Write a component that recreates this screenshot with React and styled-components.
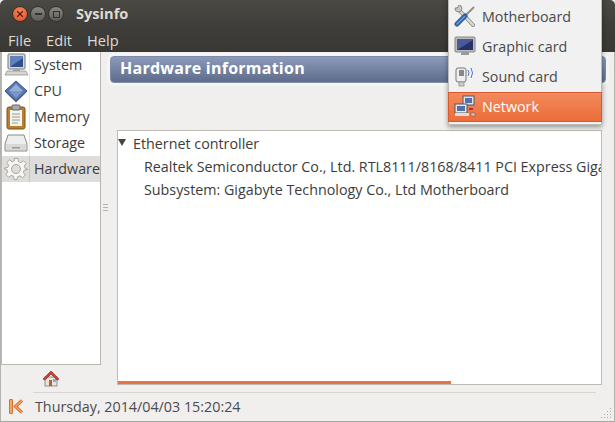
import React from "react";
import styled, { createGlobalStyle } from "styled-components";

const Global = createGlobalStyle`
  html, body { margin: 0; padding: 0; background: #f0f0f0; }
  * { box-sizing: border-box; }
`;

const Win = styled.div`
  position: relative;
  width: 615px;
  height: 422px;
  overflow: hidden;
  display: flex;
  flex-direction: column;
  background: #f0efee;
  font-family: "Open Sans", "Noto Sans", sans-serif;
  font-size: 14.3px;
  color: #3c3c3c;
  border-bottom: 1px solid #a8a6a2;
`;
const TitleBar = styled.div`
  height: 26px;
  flex: none;
  background: linear-gradient(#4a4944, #3e3d39);
  display: flex;
  align-items: center;
  padding: 2px 0 0 12px;
  border-radius: 5px 5px 0 0;
`;
const Ctl = styled.span`
  width: 16px;
  height: 16px;
  margin-right: 2px;
  border-radius: 50%;
  display: flex;
  align-items: center;
  justify-content: center;
  background: ${p => p.$close ? "radial-gradient(circle at 50% 35%, #f58a5e, #dd4a1c)" : "linear-gradient(#8a8880, #5e5c55)"};
  border: 1px solid #33322e;
`;
const Title = styled.span`
  margin-left: 10px;
  color: #dfdbd2;
  font-weight: 700;
  font-size: 14.6px;
  margin-bottom: 2px;
`;
const MenuBar = styled.div`
  height: 26px;
  flex: none;
  background: linear-gradient(#3e3d39, #393834);
  display: flex;
  align-items: center;
  gap: 15px;
  padding: 2px 0 0 8px;
  color: #dfdbd2;
  font-size: 14.6px;
`;
const Body = styled.div`
  flex: 1;
  min-height: 0;
  display: flex;
  border: solid #b5b3ae;
  border-width: 0 1px;
`;
const LeftCol = styled.div`
  width: 101px;
  flex: none;
  display: flex;
  flex-direction: column;
`;
const Side = styled.div`
  flex: none;
  height: 313px;
  background: #fff;
  border: solid #b9b7b0;
  border-width: 0 1px 1px 1px;
  width: 100px;
`;
const SideRow = styled.div`
  height: 26px;
  display: flex;
  align-items: center;
  background: ${p => p.$on ? "#dedddb" : "transparent"};
`;
const SideIcon = styled.span`
  width: 28px;
  height: 100%;
  flex: none;
  border-right: 1px solid ${p => p.$on ? "#c4c3c0" : "#e8e8e8"};
  display: flex;
  align-items: center;
  justify-content: center;
`;
const SideLabel = styled.span`
  margin: 0 0 2px 4px;
  white-space: nowrap;
`;
const HomeRow = styled.div`
  flex: 1;
  padding: 5px 0 0 41px;
`;
const Splitter = styled.div`
  width: 15px;
  flex: none;
  display: flex;
  flex-direction: column;
  justify-content: center;
  align-items: flex-start;
  padding: 0 0 30px 1px;
`;
const Grip = styled.div`
  width: 5px;
  height: 7px;
  background: repeating-linear-gradient(#b5b3ae 0 1px, transparent 1px 3px);
`;
const Main = styled.div`
  flex: 1;
  min-width: 0;
  padding: 4px 8px 7px 0;
  display: flex;
  flex-direction: column;
  margin-left: -7px;
`;
const Header = styled.div`
  height: 27px;
  flex: none;
  border-radius: 4px;
  border: 1px solid #7f8daa;
  background: linear-gradient(#8b9abb, #63718f 90%);
  box-shadow: 0 0 0 3px #f5f5f4;
  color: #fff;
  font-weight: 700;
  font-size: 16px;
  letter-spacing: 0.25px;
  display: flex;
  align-items: center;
  padding: 0 0 3px 9px;
`;
const Panel = styled.div`
  flex: 1;
  margin: 47px 4px 0 7px;
  background: #fff;
  border: 1px solid #bdbbb4;
  position: relative;
  overflow: hidden;
  padding-top: 1px;
`;
const TreeRow = styled.div`
  height: 23px;
  display: flex;
  align-items: center;
  white-space: nowrap;
  padding-left: ${p => p.$indent}px;
`;
const Arrow = styled.span`
  width: 0;
  height: 0;
  margin: 0 7px 3px 0;
  border-left: 4px solid transparent;
  border-right: 4px solid transparent;
  border-top: 7px solid #444;
`;
const Progress = styled.div`
  position: absolute;
  left: 0;
  bottom: 0;
  height: 3px;
  background: #ec7145;
`;
const Status = styled.div`
  height: 29px;
  flex: none;
  display: flex;
  align-items: center;
  position: relative;
  padding-left: 8px;
  border: solid #b5b3ae;
  border-width: 0 1px;
`;
const StatusText = styled.span`
  margin-left: 12px;
  color: #4c4c4c;
`;
const Rule = styled.div`
  position: absolute;
  left: 32px;
  right: 18px;
  top: 0;
  height: 1px;
  background: #d6d5d2;
`;
const Resize = styled.svg`
  position: absolute;
  right: 1px;
  bottom: 1px;
`;
const Menu = styled.div`
  position: absolute;
  left: 448px;
  top: -4px;
  width: 154px;
  height: 129px;
  background: #f1f1f1;
  border: 1px solid #bfbdb8;
  box-shadow: 0 2px 5px rgba(0,0,0,.4);
  padding-top: 5px;
`;
const MenuRow = styled.div`
  height: 30px;
  display: flex;
  align-items: center;
  padding: 0 0 2px 5px;
  color: ${p => p.$on ? "#fff" : "#4a4a4a"};
  background: ${p => p.$on ? "linear-gradient(#f38a5d, #ec6d39)" : "transparent"};
  border: 1px solid ${p => p.$on ? "#d8592b" : "transparent"};
  margin: 0 -1px;
`;
const MenuIcon = styled.span`
  width: 22px;
  height: 22px;
  flex: none;
  margin-right: 6px;
`;

const Computer = () => (
  <svg width="24" height="24" viewBox="0 0 24 24">
    <rect x="4" y="1" width="17" height="15" rx="1" fill="#d9d9d6" stroke="#777"/>
    <rect x="6" y="3" width="13" height="11" fill="#5f82bb"/>
    <path d="M6 14 L19 5 V14Z" fill="#2f4f8c"/>
    <rect x="9" y="16" width="7" height="2" fill="#aaa"/>
    <path d="M3 18 H22 L24 22 H1Z" fill="#d5d5d2" stroke="#888" strokeWidth=".7"/>
  </svg>
);
const Cpu = () => (
  <svg width="24" height="24" viewBox="0 0 24 24">
    <path d="M1 13 L12 23.5 L23 13 L12 20Z" fill="#777"/>
    <path d="M12 2 L23 12 L12 22 L1 12Z" fill="#5878b0" stroke="#344f86"/>
    <path d="M12 5 L19 12 L12 12 L5 12Z" fill="#93aed8"/>
    <path d="M5 12 L12 19 L19 12Z" fill="#7c97c6"/>
  </svg>
);
const Clip = () => (
  <svg width="24" height="26" viewBox="0 0 24 26">
    <rect x="3" y="3" width="18" height="22" rx="2" fill="#b97e2e" stroke="#7d5217"/>
    <rect x="6" y="6" width="12" height="16" fill="#f4f3ee"/>
    <path d="M8 10H16M8 13H16M8 16H16M8 19H14" stroke="#999"/>
    <rect x="8" y="1" width="8" height="5" rx="1" fill="#aaa" stroke="#666"/>
  </svg>
);
const Disk = () => (
  <svg width="24" height="22" viewBox="0 0 24 22">
    <path d="M4 3 H20 L23 12 V19 H1 V12Z" fill="#eeeeec" stroke="#8a8a86"/>
    <rect x="2" y="12" width="20" height="6" fill="#d9d9d6"/>
    <rect x="8" y="15" width="8" height="1.5" fill="#999"/>
  </svg>
);
const Gear = () => (
  <svg width="24" height="24" viewBox="0 0 24 24">
    <g stroke="#a5a49c" fill="#f7f7f5">
      <path d="M10 1h4l.6 3.4 2.4 1 2.8-2 2.8 2.8-2 2.8 1 2.4L24 12v.5l-3.4.6-1 2.4 2 2.8-2.8 2.8-2.8-2-2.4 1L13 23h-3l-.6-3.4-2.4-1-2.8 2-2.8-2.8 2-2.8-1-2.4L0 12v-1l3.4-.6 1-2.4-2-2.8 2.8-2.8 2.8 2 2.4-1z" transform="translate(.5 .5) scale(.96)"/>
      <circle cx="12" cy="12" r="4.5" fill="#dedddb"/>
    </g>
  </svg>
);
const Home = () => (
  <svg width="18" height="17" viewBox="0 0 18 17">
    <rect x="3" y="7" width="12" height="9" fill="#e4e4e0" stroke="#8f8f8a"/>
    <rect x="7" y="10" width="3" height="6" fill="#b06a1d"/>
    <rect x="11" y="9" width="3" height="3" fill="#8ea9cf"/>
    <path d="M1 9 L9 1 L17 9 L15 10 L9 4 L3 10Z" fill="#c8453a" stroke="#9b2f27" strokeWidth=".8"/>
  </svg>
);
const KLogo = () => (
  <svg width="14" height="15" viewBox="0 0 14 15">
    <rect x=".5" y=".5" width="3" height="14" rx=".5" fill="#f2a868" stroke="#dd6f2b"/>
    <path d="M13 1.5 L6.5 7.5 L13 13.5" fill="none" stroke="#dd6f2b" strokeWidth="3.2"/>
    <path d="M13 1.5 L6.5 7.5 L13 13.5" fill="none" stroke="#f2a868" strokeWidth="1.2"/>
  </svg>
);
const Wrench = () => (
  <svg width="22" height="22" viewBox="0 0 22 22">
    <path d="M4 4 L19 20" stroke="#8a8a86" strokeWidth="4" strokeLinecap="round"/>
    <path d="M4 4 L19 20" stroke="#dcdcd9" strokeWidth="2.2" strokeLinecap="round"/>
    <path d="M1 3 A3.5 3.5 0 1 0 5 0 L3.5 3 Z" fill="#c7c7c3" stroke="#777" strokeWidth=".8"/>
    <path d="M20 2 L11 11" stroke="#8d8d8a" strokeWidth="2"/>
    <path d="M11 11 L3 19" stroke="#2f62a8" strokeWidth="5" strokeLinecap="round"/>
    <path d="M10.5 11.5 L3 19" stroke="#6b9bd8" strokeWidth="1.4" strokeLinecap="round"/>
  </svg>
);
const Monitor = () => (
  <svg width="22" height="22" viewBox="0 0 22 22">
    <rect x="1" y="2" width="20" height="15" rx="1" fill="#bbb" stroke="#888"/>
    <rect x="3" y="4" width="16" height="11" fill="#4a5a9c"/>
    <path d="M3 15 L19 5 V15Z" fill="#28306a"/>
    <rect x="7" y="17" width="8" height="3" fill="#999"/>
  </svg>
);
const Sound = () => (
  <svg width="22" height="22" viewBox="0 0 22 22">
    <rect x="2" y="3" width="10" height="14" rx="2" fill="#eee" stroke="#777"/>
    <rect x="5" y="5" width="5" height="6" fill="#888"/>
    <rect x="5" y="17" width="5" height="4" fill="#ccc" stroke="#888" strokeWidth=".7"/>
    <path d="M14 5 Q16 8 14 11M17 3 Q20 8 17 13" fill="none" stroke="#4a78bb"/>
  </svg>
);
const Net = () => (
  <svg width="22" height="22" viewBox="0 0 22 22">
    <rect x="9" y="1" width="11" height="9" fill="#dfe3ea" stroke="#556"/>
    <rect x="11" y="3" width="7" height="5" fill="#4f72ad"/>
    <rect x="1" y="9" width="12" height="9" fill="#e9e9e9" stroke="#556"/>
    <rect x="3" y="11" width="8" height="5" fill="#4f72ad"/>
    <rect x="1" y="18" width="14" height="3" fill="#ddd"/>
    <rect x="15" y="13" width="4" height="2" fill="#a33"/>
    <rect x="17" y="18" width="4" height="3" fill="#ccc" stroke="#666" strokeWidth=".6"/>
  </svg>
);

const sideItems = [
  ["System", <Computer />], ["CPU", <Cpu />], ["Memory", <Clip />], ["Storage", <Disk />], ["Hardware", <Gear />],
];
const menuItems = [
  ["Motherboard", <Wrench />], ["Graphic card", <Monitor />], ["Sound card", <Sound />], ["Network", <Net />],
];

export default function App() {
  return (
    <Win>
      <Global />
      <TitleBar>
        <Ctl $close><svg width="6" height="6" viewBox="0 0 6 6"><path d="M0 0L6 6M6 0L0 6" stroke="#5a1a08" strokeWidth="1.3"/></svg></Ctl>
        <Ctl><svg width="7" height="2"><rect width="7" height="2" fill="#33322e"/></svg></Ctl>
        <Ctl><svg width="7" height="7"><rect x=".5" y=".5" width="6" height="6" fill="none" stroke="#33322e"/></svg></Ctl>
        <Title>Sysinfo</Title>
      </TitleBar>
      <MenuBar>
        <span>File</span><span>Edit</span><span>Help</span>
      </MenuBar>
      <Body>
        <LeftCol>
          <Side>
            {sideItems.map(([t, ic]) => (
              <SideRow key={t} $on={t === "Hardware"}>
                <SideIcon $on={t === "Hardware"}>{ic}</SideIcon>
                <SideLabel>{t}</SideLabel>
              </SideRow>
            ))}
          </Side>
          <HomeRow><Home /></HomeRow>
        </LeftCol>
        <Splitter><Grip /></Splitter>
        <Main>
          <Header>Hardware information</Header>
          <Panel>
            <TreeRow $indent={0}><Arrow />Ethernet controller</TreeRow>
            <TreeRow $indent={26}>Realtek Semiconductor Co., Ltd. RTL8111/8168/8411 PCI Express Gigabit Ethernet</TreeRow>
            <TreeRow $indent={26}>Subsystem: Gigabyte Technology Co., Ltd Motherboard</TreeRow>
            <Progress style={{ width: "69%" }} />
          </Panel>
        </Main>
      </Body>
      <Status>
        <Rule />
        <KLogo />
        <StatusText>Thursday, 2014/04/03 15:20:24</StatusText>
        <Resize width="12" height="12" viewBox="0 0 12 12" fill="#aaa">
          <rect x="9" y="0" width="1" height="1"/><rect x="9" y="3" width="1" height="1"/><rect x="6" y="3" width="1" height="1"/>
          <rect x="9" y="6" width="1" height="1"/><rect x="6" y="6" width="1" height="1"/><rect x="3" y="6" width="1" height="1"/>
          <rect x="9" y="9" width="1" height="1"/><rect x="6" y="9" width="1" height="1"/><rect x="3" y="9" width="1" height="1"/><rect x="0" y="9" width="1" height="1"/>
        </Resize>
      </Status>
      <Menu>
        {menuItems.map(([t, ic]) => (
          <MenuRow key={t} $on={t === "Network"}>
            <MenuIcon>{ic}</MenuIcon>{t}
          </MenuRow>
        ))}
      </Menu>
    </Win>
  );
}
